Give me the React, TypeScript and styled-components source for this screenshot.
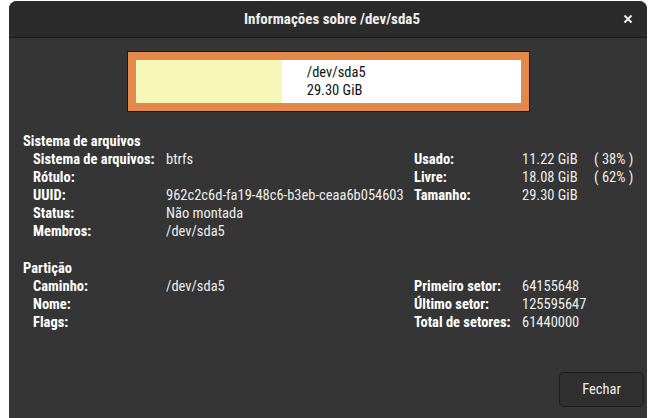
import styled, { createGlobalStyle } from 'styled-components';

const GlobalStyle = createGlobalStyle`
  html, body {
    margin: 0;
    padding: 0;
    background: #ffffff;
    overflow: hidden;
  }
  body {
    font-family: 'Roboto Condensed', 'Liberation Sans Narrow', 'DejaVu Sans Condensed', Roboto, sans-serif;
    font-stretch: condensed;
  }
`;

type TRow = {
  label: string;
  value?: string;
  sideLabel?: string;
  sideValue?: string;
  percent?: string;
};

type TSection = {
  title: string;
  rows: TRow[];
};

const sections: TSection[] = [
  {
    title: 'Sistema de arquivos',
    rows: [
      { label: 'Sistema de arquivos:', value: 'btrfs', sideLabel: 'Usado:', sideValue: '11.22 GiB', percent: '( 38% )' },
      { label: 'Rótulo:', sideLabel: 'Livre:', sideValue: '18.08 GiB', percent: '( 62% )' },
      { label: 'UUID:', value: '962c2c6d-fa19-48c6-b3eb-ceaa6b054603', sideLabel: 'Tamanho:', sideValue: '29.30 GiB' },
      { label: 'Status:', value: 'Não montada' },
      { label: 'Membros:', value: '/dev/sda5' },
    ],
  },
  {
    title: 'Partição',
    rows: [
      { label: 'Caminho:', value: '/dev/sda5', sideLabel: 'Primeiro setor:', sideValue: '64155648' },
      { label: 'Nome:', sideLabel: 'Último setor:', sideValue: '125595647' },
      { label: 'Flags:', sideLabel: 'Total de setores:', sideValue: '61440000' },
    ],
  },
];

const usedPercent = 38;

export default function App() {
  return (
    <>
      <GlobalStyle />
      <Page>
        <Window>
          <TitleBar>
            <Title>Informações sobre /dev/sda5</Title>
            <CloseButton aria-label='Fechar'>
              <svg width='10' height='10' viewBox='0 0 10 10'>
                <path d='M1.5 1.5 L8.5 8.5 M8.5 1.5 L1.5 8.5' stroke='#eeeeee' strokeWidth='2' />
              </svg>
            </CloseButton>
          </TitleBar>
          <Body>
            <UsageFrame>
              <UsageInner>
                <UsedBar style={{ width: `${usedPercent}%` }} />
                <UsageText>
                  <span>/dev/sda5</span>
                  <span>29.30 GiB</span>
                </UsageText>
              </UsageInner>
            </UsageFrame>

            {sections.map((section) => (
              <Section key={section.title}>
                <SectionTitle>{section.title}</SectionTitle>
                <InfoGrid>
                  {section.rows.map((row) => (
                    <Row key={row.label}>
                      <Label>{row.label}</Label>
                      <Value>{row.value ?? ''}</Value>
                      <Label>{row.sideLabel ?? ''}</Label>
                      <Value>{row.sideValue ?? ''}</Value>
                      <Value>{row.percent ?? ''}</Value>
                    </Row>
                  ))}
                </InfoGrid>
              </Section>
            ))}

            <Footer>
              <DialogButton>Fechar</DialogButton>
            </Footer>
          </Body>
        </Window>
      </Page>
    </>
  );
}

const Page = styled.div`
  padding: 1px 9px 0 9px;
  height: 418px;
  box-sizing: border-box;
`;

const Window = styled.div`
  display: flex;
  flex-direction: column;
  width: 638px;
  height: 420px;
  background: #353535;
  border-radius: 8px 8px 0 0;
  overflow: hidden;
  color: #ffffff;
`;

const TitleBar = styled.div`
  position: relative;
  display: flex;
  align-items: center;
  justify-content: center;
  height: 36px;
  background: #2b2b2b;
  border-bottom: 1px solid #1b1b1b;
  flex-shrink: 0;
`;

const Title = styled.div`
  font-size: 15px;
  font-weight: 700;
  color: #eeeeee;
  padding-left: 8px;
`;

const CloseButton = styled.button`
  position: absolute;
  right: 14px;
  top: 13px;
  width: 10px;
  height: 10px;
  padding: 0;
  border: none;
  background: none;
  display: flex;
`;

const Body = styled.div`
  flex: 1;
  display: flex;
  flex-direction: column;
  padding: 13px 3px 0 14px;
`;

const UsageFrame = styled.div`
  align-self: center;
  margin-left: -11px;
  padding: 8px;
  box-sizing: border-box;
  width: 403px;
  background: #e5894b;
  border: 1px solid #1a1a1a;
`;

const UsageInner = styled.div`
  display: flex;
  height: 43px;
  background: #ffffff;
`;

const UsedBar = styled.div`
  background: #f7f7b9;
  height: 100%;
  flex-shrink: 0;
`;

const UsageText = styled.div`
  display: flex;
  flex-direction: column;
  justify-content: center;
  padding-left: 25px;
  font-size: 14.5px;
  line-height: 18px;
  color: #111111;
`;

const Section = styled.div`
  display: flex;
  flex-direction: column;
  margin-top: 21px;
  & + & {
    margin-top: 19px;
  }
`;

const SectionTitle = styled.div`
  font-size: 14.5px;
  font-weight: 700;
  line-height: 18px;
  color: #ffffff;
`;

const InfoGrid = styled.div`
  display: grid;
  grid-template-columns: 133px 248px 108px 72px auto;
  padding-left: 10px;
`;

const Row = styled.div`
  display: contents;
`;

const Label = styled.div`
  font-size: 14.5px;
  font-weight: 700;
  line-height: 18px;
  color: #ffffff;
  white-space: nowrap;
`;

const Value = styled.div`
  font-size: 14.5px;
  line-height: 18px;
  color: #eeeeee;
  white-space: nowrap;
`;

const Footer = styled.div`
  margin-top: auto;
  display: flex;
  justify-content: flex-end;
  padding-bottom: 14px;
`;

const DialogButton = styled.button`
  width: 85px;
  height: 35px;
  background: #2f2f2f;
  border: 1px solid #1c1c1c;
  border-radius: 5px;
  color: #eeeeee;
  font-family: inherit;
  font-size: 14.5px;
`;
